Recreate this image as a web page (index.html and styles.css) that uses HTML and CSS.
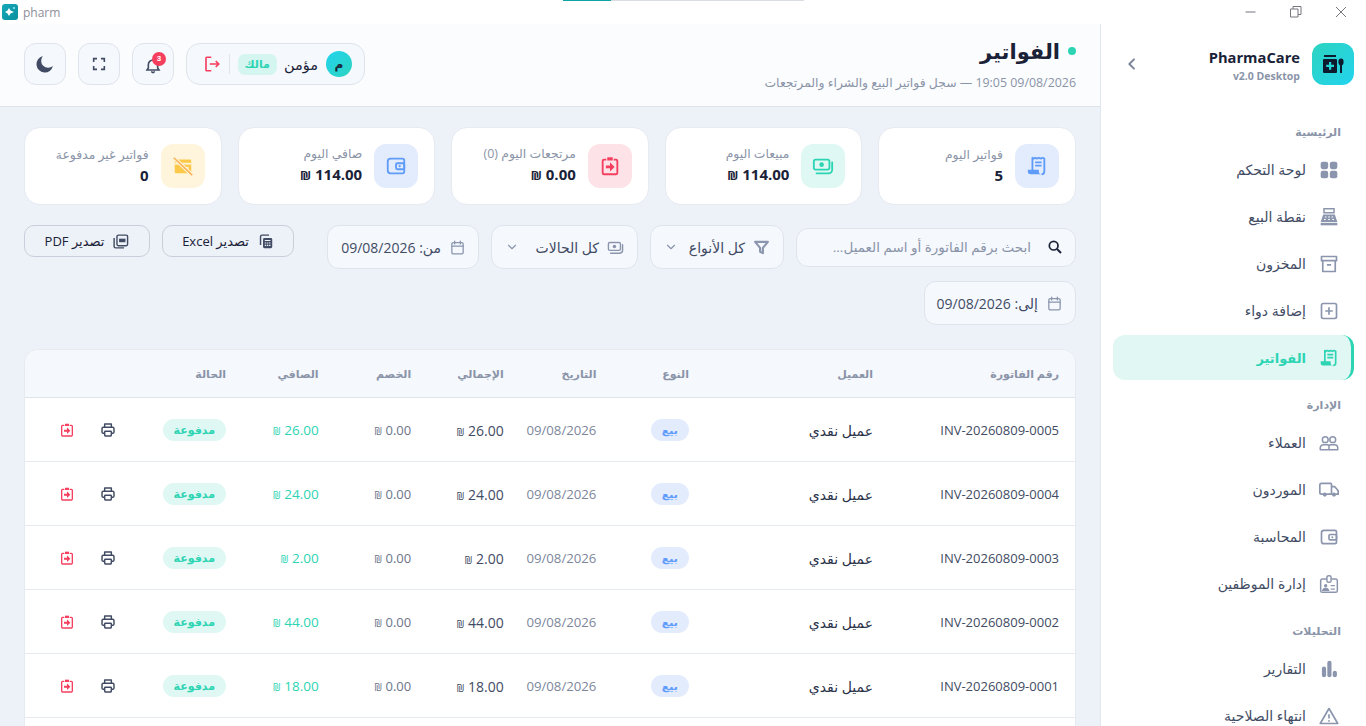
FILE: index.html
```html
<!DOCTYPE html>
<html lang="ar" dir="rtl">

<head>
    <meta charset="UTF-8">
    <meta name="viewport" content="width=device-width, initial-scale=1.0">
    <title>pharm</title>
    <link rel="stylesheet" href="styles.css">
</head>

<body>
    <!-- Shared icons -->
    <svg class="icon-defs" aria-hidden="true">
        <symbol id="i-receipt" viewBox="0 0 24 24">
            <path d="M7 17V3l1.500 1L10 3l2 1 2-1 2 1 2-1 2 1v14a3 3 0 0 1-3 3" fill="none" stroke="currentColor" stroke-width="2" stroke-linejoin="round"/>
            <path d="M10 8h7M10 11.500h7" stroke="currentColor" stroke-width="2"/>
            <path d="M2 16h12v2a3 3 0 0 0 3 3H5a3 3 0 0 1-3-3z" fill="currentColor"/>
        </symbol>
        <symbol id="i-cash" viewBox="0 0 24 24">
            <rect x="2" y="5" width="17" height="11" rx="2" fill="none" stroke="currentColor" stroke-width="2"/>
            <circle cx="10.500" cy="10.500" r="2.500" fill="currentColor"/>
            <path d="M22 8v8a4 4 0 0 1-4 4H5" fill="none" stroke="currentColor" stroke-width="2" stroke-linecap="round"/>
        </symbol>
        <symbol id="i-return" viewBox="0 0 24 24">
            <path d="M8 5H5.500A1.500 1.500 0 0 0 4 6.500v13A1.500 1.500 0 0 0 5.500 21h13a1.500 1.500 0 0 0 1.500-1.500v-13A1.500 1.500 0 0 0 18.500 5H16" fill="none" stroke="currentColor" stroke-width="2"/>
            <path d="M9 2.500h6V6H9z" fill="currentColor"/>
            <path d="M7.500 11.500H12V8l5 5-5 5v-3.500H7.500z" fill="currentColor"/>
        </symbol>
        <symbol id="i-wallet" viewBox="0 0 24 24">
            <path d="M19 4H6a3 3 0 0 0-3 3v10a3 3 0 0 0 3 3h13a2 2 0 0 0 2-2V6a2 2 0 0 0-2-2z" fill="none" stroke="currentColor" stroke-width="2"/>
            <rect x="12" y="9" width="9" height="6.500" rx="1.500" fill="none" stroke="currentColor" stroke-width="2"/>
            <circle cx="16" cy="12.200" r="1.200" fill="currentColor"/>
        </symbol>
        <symbol id="i-calendar" viewBox="0 0 24 24">
            <rect x="4" y="5" width="16" height="16" rx="2" fill="none" stroke="currentColor" stroke-width="1.800"/>
            <path d="M4 10h16M8 3v4M16 3v4" fill="none" stroke="currentColor" stroke-width="1.800" stroke-linecap="round"/>
        </symbol>
        <symbol id="i-chevron" viewBox="0 0 24 24">
            <path d="M6 9l6 6 6-6" fill="none" stroke="currentColor" stroke-width="2" stroke-linecap="round" stroke-linejoin="round"/>
        </symbol>
        <symbol id="i-printer" viewBox="0 0 24 24">
            <path d="M7 8V3h10v5M7 17H5a2 2 0 0 1-2-2v-5a2 2 0 0 1 2-2h14a2 2 0 0 1 2 2v5a2 2 0 0 1-2 2h-2" fill="none" stroke="currentColor" stroke-width="2.200" stroke-linejoin="round"/>
            <rect x="7" y="14" width="10" height="7" rx="1" fill="none" stroke="currentColor" stroke-width="2.200"/>
        </symbol>
    </svg>

    <!-- Window title bar -->
    <div class="titlebar">
        <div class="titlebar-app">
            <span class="app-icon">
                <svg viewBox="0 0 16 16" width="16" height="16"><path d="M7 4l1.500 2.500L12 8l-3.500 1.500L7 12 5.500 9.500 3 8l2.500-1.500z" fill="#fff"/><path d="M11 3h2v2h-2z" fill="#7fd6de"/></svg>
            </span>
            <span class="app-name" dir="ltr">pharm</span>
        </div>
        <div class="window-controls">
            <svg class="win-btn" viewBox="0 0 12 12"><path d="M.5 6h10" stroke="currentColor" fill="none"/></svg>
            <svg class="win-btn" viewBox="0 0 12 12"><path d="M.5 3h7.500v8H.5zM3 3V.5h8v8H8" stroke="currentColor" fill="none"/></svg>
            <svg class="win-btn" viewBox="0 0 12 12"><path d="M1 1l10 10M11 1L1 11" stroke="currentColor" fill="none"/></svg>
        </div>
        <div class="load-bar"><span class="load-bar-fill"></span></div>
    </div>

    <div class="app">
        <!-- Sidebar -->
        <aside class="sidebar">
            <div class="brand">
                <div class="brand-logo">
                    <svg viewBox="0 0 24 24" width="24" height="24">
                        <path d="M3 3h12v2H3zM3 7h12a1 1 0 0 1 1 1v12a1 1 0 0 1-1 1H3a1 1 0 0 1-1-1V8a1 1 0 0 1 1-1z" fill="#0d1b2e"/>
                        <path d="M8 10h2.200v2.800H13V15h-2.800v2.800H8V15H5.200v-2.200H8z" fill="#24d6d6"/>
                        <ellipse cx="20" cy="10" rx="2.600" ry="3.400" fill="#0d1b2e"/>
                        <rect x="19" y="12" width="2" height="9" fill="#0d1b2e"/>
                    </svg>
                </div>
                <div class="brand-text" dir="ltr">
                    <div class="brand-name">PharmaCare</div>
                    <div class="brand-version">v2.0 Desktop</div>
                </div>
                <svg class="brand-toggle" viewBox="0 0 24 24" width="16" height="16"><path d="M9 5l7 7-7 7" fill="none" stroke="currentColor" stroke-width="3" stroke-linecap="round" stroke-linejoin="round"/></svg>
            </div>

            <div class="nav-label">الرئيسية</div>
            <a class="nav-item">
                <svg viewBox="0 0 24 24"><rect x="2" y="2" width="9" height="9" rx="2.500" fill="currentColor"/><rect x="13" y="2" width="9" height="9" rx="2.500" fill="currentColor"/><rect x="2" y="13" width="9" height="9" rx="2.500" fill="currentColor"/><rect x="13" y="13" width="9" height="9" rx="2.500" fill="currentColor"/></svg>
                لوحة التحكم
            </a>
            <a class="nav-item">
                <svg viewBox="0 0 24 24"><path d="M6 2h12v5H6z" fill="none" stroke="currentColor" stroke-width="1.800"/><path d="M5 9h14l3 9H2z" fill="currentColor"/><path d="M2 19h20v3H2z" fill="currentColor"/><path d="M7 12h2M11 12h2M15 12h2M6 15h2M11 15h2M16 15h2" stroke="#fff" stroke-width="1.200"/></svg>
                نقطة البيع
            </a>
            <a class="nav-item">
                <svg viewBox="0 0 24 24"><path d="M3 3h18v5H3zM4.500 8v13h15V8M9.500 13h5" fill="none" stroke="currentColor" stroke-width="2" stroke-linejoin="round"/></svg>
                المخزون
            </a>
            <a class="nav-item">
                <svg viewBox="0 0 24 24"><rect x="3" y="3" width="18" height="18" rx="2" fill="none" stroke="currentColor" stroke-width="2"/><path d="M12 7.500v9M7.500 12h9" stroke="currentColor" stroke-width="2"/></svg>
                إضافة دواء
            </a>
            <a class="nav-item active">
                <svg viewBox="0 0 24 24"><use href="#i-receipt"/></svg>
                الفواتير
            </a>

            <div class="nav-label">الإدارة</div>
            <a class="nav-item">
                <svg viewBox="0 0 24 24"><circle cx="7.500" cy="8" r="3.500" fill="none" stroke="currentColor" stroke-width="1.800"/><circle cx="16.500" cy="8" r="3.500" fill="none" stroke="currentColor" stroke-width="1.800"/><path d="M1.500 20v-2a4 4 0 0 1 4-4h4a3 3 0 0 1 2.500 1.300A3 3 0 0 1 14.500 14h4a4 4 0 0 1 4 4v2zM12 15.300V20" fill="none" stroke="currentColor" stroke-width="1.800" stroke-linejoin="round"/></svg>
                العملاء
            </a>
            <a class="nav-item">
                <svg viewBox="0 0 24 24"><path d="M5 17H3a2 2 0 0 1-2-2V6a2 2 0 0 1 2-2h11a1 1 0 0 1 1 1v12H9M15 8h4l4 5v4h-3" fill="none" stroke="currentColor" stroke-width="2" stroke-linejoin="round"/><circle cx="7" cy="17.500" r="2.500" fill="currentColor"/><circle cx="18" cy="17.500" r="2.500" fill="currentColor"/></svg>
                الموردون
            </a>
            <a class="nav-item">
                <svg viewBox="0 0 24 24"><use href="#i-wallet"/></svg>
                المحاسبة
            </a>
            <a class="nav-item">
                <svg viewBox="0 0 24 24"><path d="M9 6H4a2 2 0 0 0-2 2v12a2 2 0 0 0 2 2h16a2 2 0 0 0 2-2V8a2 2 0 0 0-2-2h-5" fill="none" stroke="currentColor" stroke-width="1.800"/><rect x="9.500" y="2" width="5" height="8" rx="2" fill="none" stroke="currentColor" stroke-width="1.800"/><circle cx="8" cy="14" r="2" fill="currentColor"/><path d="M4.500 19.500c.5-2 2-2.500 3.500-2.500s3 .5 3.500 2.500zM14 14h5M14 18h5" fill="currentColor" stroke="currentColor" stroke-width="1.500"/></svg>
                إدارة الموظفين
            </a>

            <div class="nav-label">التحليلات</div>
            <a class="nav-item">
                <svg viewBox="0 0 24 24"><rect x="3.500" y="9" width="5" height="13" rx="2.500" fill="currentColor"/><rect x="10" y="2" width="5" height="20" rx="2.500" fill="currentColor"/><rect x="16.500" y="14" width="5" height="8" rx="2.500" fill="currentColor"/></svg>
                التقارير
            </a>
            <a class="nav-item">
                <svg viewBox="0 0 24 24"><path d="M12 3L1.500 21h21z" fill="none" stroke="currentColor" stroke-width="2" stroke-linejoin="round"/><path d="M12 10v5M12 17v2" stroke="currentColor" stroke-width="2"/></svg>
                انتهاء الصلاحية
            </a>
        </aside>

        <main class="main">
            <!-- Page header -->
            <header class="page-header">
                <div class="page-heading">
                    <h1 class="page-title"><span class="status-dot"></span>الفواتير</h1>
                    <p class="page-sub">09/08/2026 19:05 — سجل فواتير البيع والشراء والمرتجعات</p>
                </div>
                <div class="header-tools">
                    <div class="user-pill">
                        <span class="avatar">م</span>
                        <span class="user-name">مؤمن</span>
                        <span class="role-tag">مالك</span>
                        <span class="pill-sep"></span>
                        <svg class="logout-icon" viewBox="0 0 24 24"><path d="M11 3H5a1 1 0 0 0-1 1v16a1 1 0 0 0 1 1h6" fill="none" stroke="currentColor" stroke-width="2.200"/><path d="M9 12h12M17 8l4 4-4 4" fill="none" stroke="currentColor" stroke-width="2.200"/></svg>
                    </div>
                    <button class="tool-btn">
                        <svg class="bell-icon" viewBox="0 0 24 24" width="16" height="16"><path d="M12 3a7 7 0 0 0-7 7v5l-2 3h18l-2-3v-5a7 7 0 0 0-7-7zM10 20a2 2 0 0 0 4 0" fill="none" stroke="currentColor" stroke-width="2.400"/></svg>
                        <span class="badge">3</span>
                    </button>
                    <button class="tool-btn">
                        <svg viewBox="0 0 24 24" width="16" height="16"><path d="M4 9V4h5M15 4h5v5M20 15v5h-5M9 20H4v-5" fill="none" stroke="currentColor" stroke-width="2.400"/></svg>
                    </button>
                    <button class="tool-btn">
                        <svg viewBox="0 0 24 24" width="20" height="20"><path d="M9.500 2.500A10 10 0 1 0 21.500 14.500 8.500 8.500 0 0 1 9.500 2.500z" fill="currentColor"/></svg>
                    </button>
                </div>
            </header>

            <div class="content">
                <!-- Stats -->
                <section class="stats">
                    <div class="stat-card">
                        <span class="stat-icon blue"><svg viewBox="0 0 24 24"><use href="#i-receipt"/></svg></span>
                        <div><div class="stat-label">فواتير اليوم</div><div class="stat-value">5</div></div>
                    </div>
                    <div class="stat-card">
                        <span class="stat-icon green"><svg viewBox="0 0 24 24"><use href="#i-cash"/></svg></span>
                        <div><div class="stat-label">مبيعات اليوم</div><div class="stat-value">114.00 <span class="sheqel">₪</span></div></div>
                    </div>
                    <div class="stat-card">
                        <span class="stat-icon red"><svg viewBox="0 0 24 24"><use href="#i-return"/></svg></span>
                        <div><div class="stat-label">مرتجعات اليوم (0)</div><div class="stat-value">0.00 <span class="sheqel">₪</span></div></div>
                    </div>
                    <div class="stat-card">
                        <span class="stat-icon blue"><svg viewBox="0 0 24 24"><use href="#i-wallet"/></svg></span>
                        <div><div class="stat-label">صافي اليوم</div><div class="stat-value">114.00 <span class="sheqel">₪</span></div></div>
                    </div>
                    <div class="stat-card">
                        <span class="stat-icon amber">
                            <svg viewBox="0 0 24 24"><rect x="3" y="5" width="18" height="15" rx="1.500" fill="#fdc94a"/><path d="M3 9.500h18" stroke="#fff4d8" stroke-width="2"/><path d="M13 13h5v3h-5z" fill="#fff4d8"/><path d="M2 3l20 19" stroke="#fff4d8" stroke-width="4"/><path d="M2 3l20 19" stroke="#f9b35a" stroke-width="1.800"/></svg>
                        </span>
                        <div><div class="stat-label">فواتير غير مدفوعة</div><div class="stat-value">0</div></div>
                    </div>
                </section>

                <!-- Filters -->
                <section class="filters">
                    <div class="search-box">
                        <svg viewBox="0 0 24 24" width="16" height="16"><circle cx="10" cy="10" r="6.500" fill="none" stroke="currentColor" stroke-width="2.600"/><path d="M15 15l6 6" stroke="currentColor" stroke-width="2.800"/></svg>
                        <span class="search-text">ابحث برقم الفاتورة أو اسم العميل...</span>
                    </div>
                    <div class="filter-select type-select">
                        <svg class="select-icon" viewBox="0 0 24 24"><path d="M3 4h18l-7 8.500V20l-4-2v-5.500z" fill="none" stroke="currentColor" stroke-width="3" stroke-linejoin="round"/></svg>
                        <span class="select-text">كل الأنواع</span>
                        <svg class="select-chevron" viewBox="0 0 24 24"><use href="#i-chevron"/></svg>
                    </div>
                    <div class="filter-select status-select">
                        <svg class="select-icon" viewBox="0 0 24 24"><use href="#i-cash"/></svg>
                        <span class="select-text">كل الحالات</span>
                        <svg class="select-chevron" viewBox="0 0 24 24"><use href="#i-chevron"/></svg>
                    </div>
                    <div class="date-field">
                        <svg class="select-icon" viewBox="0 0 24 24"><use href="#i-calendar"/></svg>
                        <span>من: 09/08/2026</span>
                    </div>
                    <div class="exports">
                        <button class="export-btn excel-btn">
                            <svg viewBox="0 0 24 24"><path d="M5 17V5a2 2 0 0 1 2-2h10" fill="none" stroke="currentColor" stroke-width="2"/><rect x="8.500" y="7" width="13" height="14.500" rx="2" fill="currentColor"/><path d="M11 10.500h8M11 14h2M14 14h2M17 14h2M11 17.500h2M14 17.500h2M17 17.500h2" stroke="#edf1f8" stroke-width="1.500"/></svg>
                            تصدير Excel
                        </button>
                        <button class="export-btn pdf-btn">
                            <svg viewBox="0 0 24 24"><rect x="7" y="3" width="15" height="15" rx="2" fill="none" stroke="currentColor" stroke-width="2"/><path d="M3 7v12a2 2 0 0 0 2 2h12" fill="none" stroke="currentColor" stroke-width="2"/><rect x="10" y="8" width="9" height="5" fill="currentColor"/></svg>
                            تصدير PDF
                        </button>
                    </div>
                    <div class="date-field">
                        <svg class="select-icon" viewBox="0 0 24 24"><use href="#i-calendar"/></svg>
                        <span>إلى: 09/08/2026</span>
                    </div>
                </section>

                <!-- Invoices table -->
                <section class="table-card">
                    <table class="invoices">
                        <colgroup>
                            <col class="col-number">
                            <col class="col-client">
                            <col class="col-short">
                            <col class="col-short">
                            <col class="col-short">
                            <col class="col-short">
                            <col class="col-short">
                            <col class="col-status">
                            <col>
                        </colgroup>
                        <thead>
                            <tr>
                                <th>رقم الفاتورة</th>
                                <th>العميل</th>
                                <th>النوع</th>
                                <th>التاريخ</th>
                                <th>الإجمالي</th>
                                <th>الخصم</th>
                                <th>الصافي</th>
                                <th>الحالة</th>
                                <th></th>
                            </tr>
                        </thead>
                        <tbody>
                            <tr>
                                <td>INV-20260809-0005</td>
                                <td class="cell-client">عميل نقدي</td>
                                <td><span class="tag tag-sale">بيع</span></td>
                                <td class="cell-date">09/08/2026</td>
                                <td class="cell-total">26.00 <span class="sheqel">₪</span></td>
                                <td class="cell-discount">0.00 <span class="sheqel">₪</span></td>
                                <td class="cell-net">26.00 <span class="sheqel">₪</span></td>
                                <td><span class="tag tag-paid">مدفوعة</span></td>
                                <td><div class="row-actions"><svg class="act-print" viewBox="0 0 24 24"><use href="#i-printer"/></svg><svg class="act-return" viewBox="0 0 24 24"><use href="#i-return"/></svg></div></td>
                            </tr>
                            <tr>
                                <td>INV-20260809-0004</td>
                                <td class="cell-client">عميل نقدي</td>
                                <td><span class="tag tag-sale">بيع</span></td>
                                <td class="cell-date">09/08/2026</td>
                                <td class="cell-total">24.00 <span class="sheqel">₪</span></td>
                                <td class="cell-discount">0.00 <span class="sheqel">₪</span></td>
                                <td class="cell-net">24.00 <span class="sheqel">₪</span></td>
                                <td><span class="tag tag-paid">مدفوعة</span></td>
                                <td><div class="row-actions"><svg class="act-print" viewBox="0 0 24 24"><use href="#i-printer"/></svg><svg class="act-return" viewBox="0 0 24 24"><use href="#i-return"/></svg></div></td>
                            </tr>
                            <tr>
                                <td>INV-20260809-0003</td>
                                <td class="cell-client">عميل نقدي</td>
                                <td><span class="tag tag-sale">بيع</span></td>
                                <td class="cell-date">09/08/2026</td>
                                <td class="cell-total">2.00 <span class="sheqel">₪</span></td>
                                <td class="cell-discount">0.00 <span class="sheqel">₪</span></td>
                                <td class="cell-net">2.00 <span class="sheqel">₪</span></td>
                                <td><span class="tag tag-paid">مدفوعة</span></td>
                                <td><div class="row-actions"><svg class="act-print" viewBox="0 0 24 24"><use href="#i-printer"/></svg><svg class="act-return" viewBox="0 0 24 24"><use href="#i-return"/></svg></div></td>
                            </tr>
                            <tr>
                                <td>INV-20260809-0002</td>
                                <td class="cell-client">عميل نقدي</td>
                                <td><span class="tag tag-sale">بيع</span></td>
                                <td class="cell-date">09/08/2026</td>
                                <td class="cell-total">44.00 <span class="sheqel">₪</span></td>
                                <td class="cell-discount">0.00 <span class="sheqel">₪</span></td>
                                <td class="cell-net">44.00 <span class="sheqel">₪</span></td>
                                <td><span class="tag tag-paid">مدفوعة</span></td>
                                <td><div class="row-actions"><svg class="act-print" viewBox="0 0 24 24"><use href="#i-printer"/></svg><svg class="act-return" viewBox="0 0 24 24"><use href="#i-return"/></svg></div></td>
                            </tr>
                            <tr>
                                <td>INV-20260809-0001</td>
                                <td class="cell-client">عميل نقدي</td>
                                <td><span class="tag tag-sale">بيع</span></td>
                                <td class="cell-date">09/08/2026</td>
                                <td class="cell-total">18.00 <span class="sheqel">₪</span></td>
                                <td class="cell-discount">0.00 <span class="sheqel">₪</span></td>
                                <td class="cell-net">18.00 <span class="sheqel">₪</span></td>
                                <td><span class="tag tag-paid">مدفوعة</span></td>
                                <td><div class="row-actions"><svg class="act-print" viewBox="0 0 24 24"><use href="#i-printer"/></svg><svg class="act-return" viewBox="0 0 24 24"><use href="#i-return"/></svg></div></td>
                            </tr>
                        </tbody>
                    </table>
                </section>
            </div>
        </main>
    </div>
</body>

</html>
```

FILE: styles.css
```css
* {
    box-sizing: border-box;
}

html,
body {
    height: 100%;
}

body {
    margin: 0;
    overflow: hidden;
    display: flex;
    flex-direction: column;
    font-family: 'Open Sans', 'DejaVu Sans', sans-serif;
    font-size: 14px;
    color: #1a2238;
    background-color: #fff;
}

.icon-defs {
    position: absolute;
    width: 0;
    height: 0;
}

/* Title bar */
.titlebar {
    position: relative;
    height: 24px;
    flex: none;
    display: flex;
    flex-direction: row-reverse;
    justify-content: space-between;
    align-items: center;
    background-color: #fff;
}

.titlebar-app {
    display: flex;
    align-items: center;
    flex-direction: row-reverse;
    gap: 5px;
    padding-left: 2px;
}

.app-icon {
    width: 16px;
    height: 16px;
    border-radius: 3px;
    background: linear-gradient(135deg, #14a9bb, #0c8f9c);
    display: block;
}

.app-icon svg {
    display: block;
}

.app-name {
    font-size: 12px;
    color: #8e8e99;
}

.window-controls {
    display: flex;
    gap: 33px;
    padding-right: 19px;
    direction: ltr;
    color: #77777f;
}

.win-btn {
    width: 12px;
    height: 12px;
}

.load-bar {
    position: absolute;
    top: 0;
    left: 563px;
    width: 241px;
    height: 1px;
    direction: ltr;
    background-color: #d9dde3;
}

.load-bar-fill {
    display: block;
    width: 48px;
    height: 1px;
    background-color: #10a5a5;
}

/* Layout */
.app {
    flex: 1;
    min-height: 0;
    display: flex;
}

.sidebar {
    width: 266px;
    flex: none;
    padding: 19px 12px 0;
    background-color: #fff;
    border-left: 1px solid #e2e7ef;
}

.main {
    flex: 1;
    min-width: 0;
    background-color: #edf1f8;
}

/* Sidebar */
.brand {
    display: flex;
    align-items: center;
    gap: 12px;
    height: 42px;
    margin-bottom: 39px;
}

.brand-logo {
    width: 42px;
    height: 42px;
    border-radius: 12px;
    background: linear-gradient(135deg, #2dd4bf, #22d3ee);
    display: flex;
    align-items: center;
    justify-content: center;
}

.brand-text {
    padding-top: 2px;
}

.brand-name {
    font-size: 14.700px;
    font-weight: 700;
    line-height: 19px;
    text-align: right;
}

.brand-version {
    margin-top: 2px;
    font-size: 10.500px;
    font-weight: 700;
    line-height: 14px;
    color: #8a94a8;
    text-align: right;
}

.brand-toggle {
    margin-right: auto;
    margin-left: 11px;
    color: #7d879c;
    transform: rotate(180deg);
}

.nav-label {
    padding: 0 13px;
    font-size: 11px;
    line-height: 16px;
    font-weight: 600;
    color: #8a94a8;
    margin-bottom: 7px;
}

.nav-item + .nav-label {
    margin-top: 17px;
}

.nav-item {
    display: flex;
    align-items: center;
    gap: 13px;
    height: 45px;
    margin-bottom: 2px;
    padding: 0 15px;
    border-radius: 12px;
    font-size: 14px;
    color: #414b63;
}

.nav-item svg {
    width: 20px;
    height: 20px;
    flex: none;
    color: #8b95ad;
}

.nav-item.active {
    background-color: #e0f7f3;
    border-right: 3px solid #2dd4b4;
    padding-right: 12px;
    color: #2dd4b4;
    font-size: 13px;
    font-weight: 700;
}

.nav-item.active svg {
    color: #2dd4b4;
}

/* Page header */
.page-header {
    height: 83px;
    padding: 0 24px 2px;
    display: flex;
    justify-content: space-between;
    align-items: center;
    background-color: #fbfcfe;
    border-bottom: 1px solid #dfe4ec;
}

.page-title {
    margin: 0;
    display: flex;
    align-items: center;
    gap: 8px;
    font-size: 21px;
    line-height: 30px;
    font-weight: 700;
}

.status-dot {
    width: 8px;
    height: 8px;
    border-radius: 50%;
    background-color: #2dd4b4;
}

.page-sub {
    margin: 8px 0 0;
    font-size: 12.400px;
    line-height: 18px;
    color: #8a94a8;
}

.header-tools {
    display: flex;
    gap: 12px;
}

.tool-btn {
    position: relative;
    width: 42px;
    height: 42px;
    padding: 0;
    border: 1px solid #dfe4ec;
    border-radius: 12px;
    background-color: #f5f8fd;
    color: #414b63;
    display: flex;
    align-items: center;
    justify-content: center;
}

.bell-icon {
    margin-top: 4px;
}

.badge {
    position: absolute;
    top: 8px;
    left: 19px;
    width: 14px;
    height: 14px;
    border-radius: 50%;
    background-color: #f43f5e;
    color: #fff;
    font-size: 8px;
    line-height: 14px;
    font-weight: 700;
    text-align: center;
}

.user-pill {
    width: 179px;
    height: 42px;
    padding: 0 12px;
    display: flex;
    align-items: center;
    border: 1px solid #dfe4ec;
    border-radius: 14px;
    background-color: #f5f8fd;
}

.avatar {
    width: 26px;
    height: 26px;
    border-radius: 50%;
    background: linear-gradient(135deg, #22d3ee, #2dd4bf);
    font-size: 12px;
    font-weight: 700;
    line-height: 26px;
    text-align: center;
}

.user-name {
    margin-right: 8px;
    font-size: 14.500px;
}

.role-tag {
    margin-right: 7px;
    padding: 0 7px;
    height: 21px;
    border-radius: 7px;
    background-color: #d5f5f0;
    color: #2dd4b4;
    font-size: 11px;
    line-height: 20px;
    font-weight: 700;
}

.pill-sep {
    width: 1px;
    height: 20px;
    margin: 0 8px;
    background-color: #dfe4ec;
}

.logout-icon {
    width: 18px;
    height: 18px;
    color: #f43f5e;
}

/* Stats */
.content {
    padding: 20px 24px 0;
}

.stats {
    display: grid;
    grid-template-columns: repeat(5, 1fr);
    gap: 16px;
}

.stat-card {
    height: 78px;
    padding: 0 16px;
    display: flex;
    align-items: center;
    gap: 12px;
    background-color: #fff;
    border: 1px solid #e6eaf1;
    border-radius: 16px;
}

.stat-icon {
    width: 44px;
    height: 44px;
    flex: none;
    border-radius: 12px;
    display: flex;
    align-items: center;
    justify-content: center;
}

.stat-icon svg {
    width: 22px;
    height: 22px;
}

.stat-icon.blue {
    background-color: #e3ecfd;
    color: #5f9bf8;
}

.stat-icon.green {
    background-color: #dff8f3;
    color: #2dd4b4;
}

.stat-icon.red {
    background-color: #fde2e7;
    color: #f43f5e;
}

.stat-icon.amber {
    background-color: #fff5dc;
}

.stat-label {
    font-size: 12.400px;
    line-height: 18px;
    color: #8a94a8;
}

.stat-value {
    font-size: 15px;
    line-height: 22px;
    font-weight: 700;
}

.stat-value .sheqel {
    font-size: 12px;
}

/* Filters */
.filters {
    margin-top: 20px;
    display: flex;
    flex-wrap: wrap;
    align-items: center;
    gap: 12px;
}

.search-box,
.filter-select,
.date-field {
    display: flex;
    align-items: center;
    background-color: #f5f8fd;
    border: 1px solid #dfe4ec;
    font-size: 14px;
    white-space: nowrap;
}

.search-box {
    width: 280px;
    height: 39px;
    padding: 0 12px;
    gap: 16px;
    border-radius: 12px;
    color: #1a2238;
}

.search-text {
    font-size: 13.500px;
    color: #8a94a8;
}

.filter-select {
    height: 44px;
    padding: 0 13px;
    gap: 8px;
    border-radius: 12px;
    color: #414b63;
}

.type-select {
    width: 134px;
}

.status-select {
    width: 147px;
}

.select-icon {
    width: 17px;
    height: 17px;
    flex: none;
    color: #8b95ad;
}

.select-chevron {
    width: 14px;
    height: 14px;
    margin-right: auto;
    color: #8b95ad;
}

.date-field {
    width: 152px;
    height: 44px;
    padding: 0 12px;
    gap: 8px;
    border-radius: 12px;
    color: #414b63;
}

.exports {
    margin-right: auto;
    align-self: flex-start;
    display: flex;
    gap: 12px;
}

.export-btn {
    height: 32px;
    padding: 0;
    display: flex;
    align-items: center;
    justify-content: center;
    gap: 8px;
    border: 1px solid #c9cfda;
    border-radius: 10px;
    background-color: transparent;
    font-family: inherit;
    font-size: 13px;
    color: #1a2238;
}

.export-btn svg {
    width: 17px;
    height: 17px;
    color: #414b63;
}

.excel-btn {
    width: 132px;
}

.pdf-btn {
    width: 126px;
}

/* Table */
.table-card {
    margin-top: 24px;
    background-color: #fff;
    border: 1px solid #e6eaf1;
    border-radius: 14px;
    overflow: hidden;
    padding-bottom: 40px;
}

.invoices {
    width: 100%;
    border-collapse: collapse;
    table-layout: fixed;
}

.col-number {
    width: 186px;
}

.col-client {
    width: 184px;
}

.col-short {
    width: 92.600px;
}

.col-status {
    width: 101px;
}

.invoices th {
    height: 47px;
    padding: 0 16px;
    text-align: right;
    font-size: 11px;
    font-weight: 600;
    color: #8a94a8;
    background-color: #f5f8fd;
    border-bottom: 1px solid #dfe4ec;
}

.invoices td {
    height: 64px;
    padding: 2px 16px 0;
    font-size: 13px;
    color: #414b63;
    border-bottom: 1px solid #e6eaf1;
    white-space: nowrap;
}

.invoices .cell-client {
    font-size: 14px;
    color: #2a3248;
}

.invoices .cell-date {
    font-size: 13.200px;
    color: #7d879c;
}

.invoices .cell-total {
    font-size: 14px;
}

.invoices .cell-discount {
    color: #6c7589;
}

.invoices .cell-net {
    font-size: 13.500px;
    color: #2dd4b4;
    font-weight: 500;
}

.sheqel {
    font-size: 10px;
}

.tag {
    display: inline-block;
    height: 22px;
    padding: 0 11px;
    border-radius: 11px;
    font-size: 11px;
    line-height: 21px;
    font-weight: 700;
}

.tag-sale {
    background-color: #e3ecfd;
    color: #5f9bf8;
}

.tag-paid {
    background-color: #dff8f3;
    color: #2dd4b4;
}

.row-actions {
    display: flex;
    gap: 25px;
    padding-right: 9px;
}

.row-actions svg {
    width: 16px;
    height: 16px;
}

.act-print {
    color: #414b63;
}

.act-return {
    color: #f43f5e;
}
```
